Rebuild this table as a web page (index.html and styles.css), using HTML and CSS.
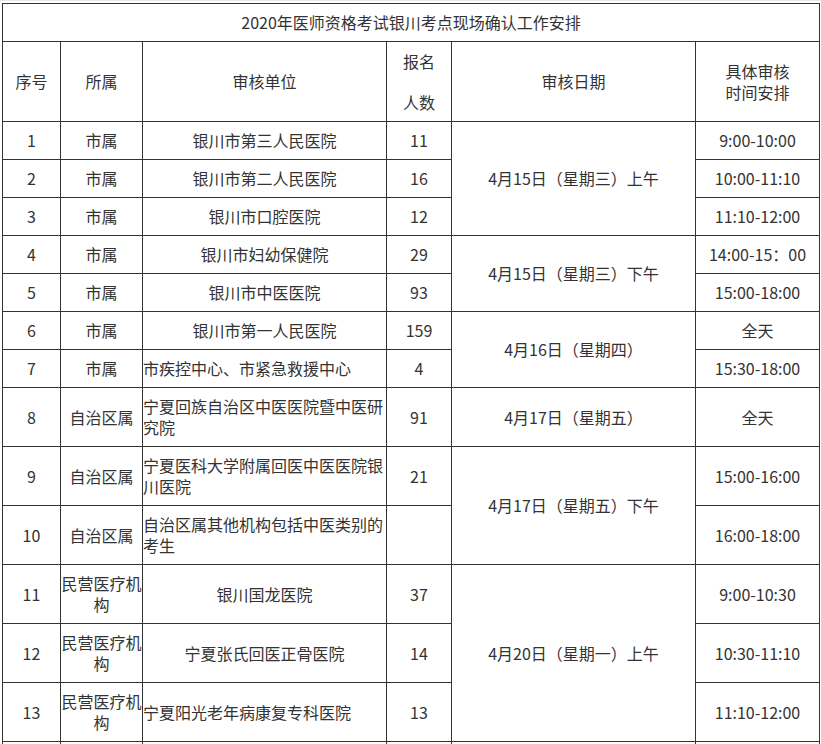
FILE: index.html
```html
<!DOCTYPE html>
<html lang="zh-CN">
<head>
<meta charset="utf-8">
<title>2020年医师资格考试银川考点现场确认工作安排</title>
<link rel="stylesheet" href="styles.css">
</head>
<body>
<div class="page">
<table class="sched">
  <colgroup>
    <col class="c-no"><col class="c-belong"><col class="c-unit"><col class="c-count"><col class="c-date"><col class="c-time">
  </colgroup>
  <tr class="r-title"><td colspan="6">2020年医师资格考试银川考点现场确认工作安排</td></tr>
  <tr class="r-head">
    <td>序号</td>
    <td>所属</td>
    <td>审核单位</td>
    <td><span class="hl hl-a">报名</span><span class="hl">人数</span></td>
    <td>审核日期</td>
    <td><span class="wrap4">具体审核时间安排</span></td>
  </tr>
  <tr class="r-s"><td>1</td><td>市属</td><td>银川市第三人民医院</td><td>11</td><td rowspan="3">4月15日（星期三）上午</td><td>9:00-10:00</td></tr>
  <tr class="r-s"><td>2</td><td>市属</td><td>银川市第二人民医院</td><td>16</td><td>10:00-11:10</td></tr>
  <tr class="r-s"><td>3</td><td>市属</td><td>银川市口腔医院</td><td>12</td><td>11:10-12:00</td></tr>
  <tr class="r-s"><td>4</td><td>市属</td><td>银川市妇幼保健院</td><td>29</td><td rowspan="2">4月15日（星期三）下午</td><td>14:00-15：00</td></tr>
  <tr class="r-s"><td>5</td><td>市属</td><td>银川市中医医院</td><td>93</td><td>15:00-18:00</td></tr>
  <tr class="r-s"><td>6</td><td>市属</td><td>银川市第一人民医院</td><td>159</td><td rowspan="2">4月16日（星期四）</td><td>全天</td></tr>
  <tr class="r-s"><td>7</td><td>市属</td><td class="left">市疾控中心、市紧急救援中心</td><td>4</td><td>15:30-18:00</td></tr>
  <tr class="r-t"><td>8</td><td>自治区属</td><td class="left">宁夏回族自治区中医医院暨中医研究院</td><td>91</td><td>4月17日（星期五）</td><td>全天</td></tr>
  <tr class="r-t"><td>9</td><td>自治区属</td><td class="left">宁夏医科大学附属回医中医医院银川医院</td><td>21</td><td rowspan="2">4月17日（星期五）下午</td><td>15:00-16:00</td></tr>
  <tr class="r-t"><td>10</td><td>自治区属</td><td class="left">自治区属其他机构包括中医类别的考生</td><td></td><td>16:00-18:00</td></tr>
  <tr class="r-t"><td>11</td><td>民营医疗机构</td><td>银川国龙医院</td><td>37</td><td rowspan="3">4月20日（星期一）上午</td><td>9:00-10:30</td></tr>
  <tr class="r-t"><td>12</td><td>民营医疗机构</td><td>宁夏张氏回医正骨医院</td><td>14</td><td>10:30-11:10</td></tr>
  <tr class="r-t"><td>13</td><td>民营医疗机构</td><td class="left">宁夏阳光老年病康复专科医院</td><td>13</td><td>11:10-12:00</td></tr>
  <tr class="r-t"><td></td><td></td><td></td><td></td><td></td><td></td></tr>
</table>
</div>
</body>
</html>
```
FILE: styles.css
```css
html, body {
  margin: 0;
  padding: 0;
  background: #fff;
}
body {
  border-top: 1px solid #e6e6e6;
  font-family: "Noto Sans CJK SC", "Noto Sans", sans-serif;
  font-size: 16px;
  color: #333;
}
.page {
  padding: 2px 2px 0 2px;
}
.sched {
  border-collapse: collapse;
  table-layout: fixed;
  width: 817px;
}
.c-no { width: 58px; }
.c-belong { width: 82px; }
.c-unit { width: 244px; }
.c-count { width: 65px; }
.c-date { width: 244px; }
.c-time { width: 124px; }
.sched td {
  border: 1px solid #333;
  padding: 0;
  text-align: center;
  vertical-align: middle;
  line-height: 21px;
  word-break: break-all;
}
.sched td.left {
  text-align: left;
}
.r-title td { height: 37px; }
.r-head td { height: 79px; }
.r-s td { height: 37px; }
.r-t td { height: 58px; }
.hl {
  display: block;
}
.hl-a {
  margin-bottom: 20px;
}
.wrap4 {
  display: inline-block;
  width: 64px;
}
```
